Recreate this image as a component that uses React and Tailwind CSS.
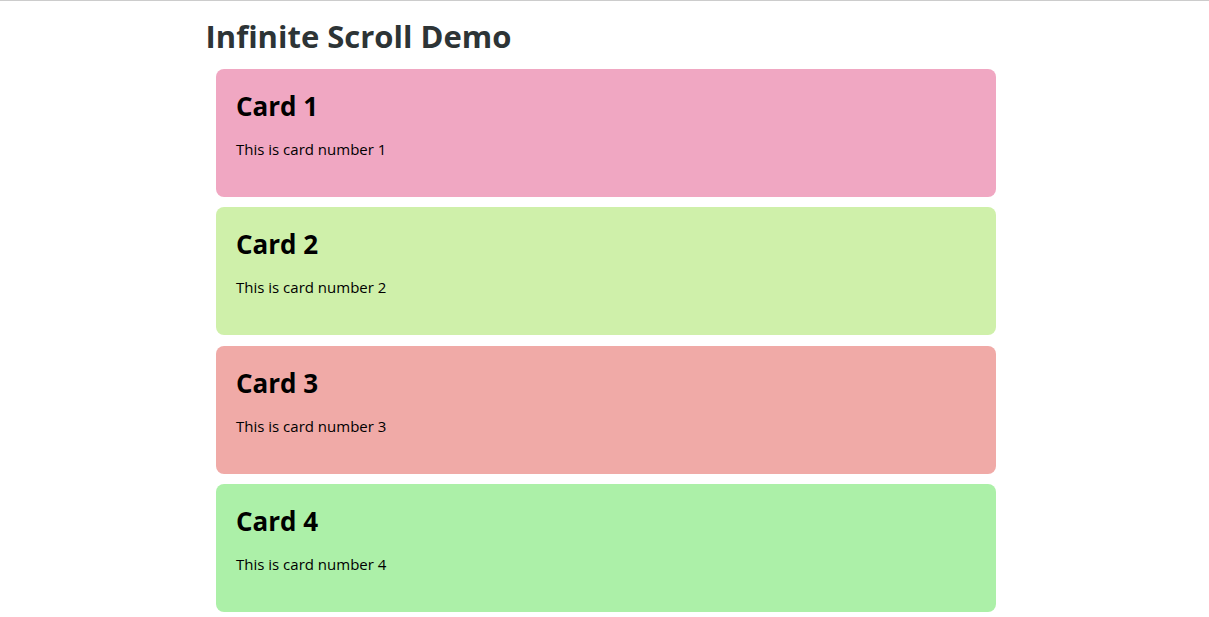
import React from 'react';

const cards = [
  { id: 1, color: 'bg-[#f0a7c2]' },
  { id: 2, color: 'bg-[#cff0aa]' },
  { id: 3, color: 'bg-[#f0aaa7]' },
  { id: 4, color: 'bg-[#acf0a8]' },
];

const App = () => {
  return (
    <div className="min-h-screen bg-white border-t border-[#cccccc] font-['Open_Sans',sans-serif]">
      <div className="w-[800px] mx-auto">
        <h1 className="pl-[1px] pt-[16px] text-[31px] leading-[38px] font-bold text-[#2d3436]">
          Infinite Scroll Demo
        </h1>
        <div className="mt-[14px] flex flex-col gap-[10.3px]">
          {cards.map((card) => (
            <div
              key={card.id}
              className={`ml-[11.5px] w-[780px] h-[128px] rounded-lg p-5 ${card.color}`}
            >
              <h2 className="mt-[2px] text-[26px] leading-[30px] font-bold text-black">Card {card.id}</h2>
              <p className="mt-4 text-[15px] leading-6 text-black">This is card number {card.id}</p>
            </div>
          ))}
        </div>
      </div>
    </div>
  );
};

export default App;
